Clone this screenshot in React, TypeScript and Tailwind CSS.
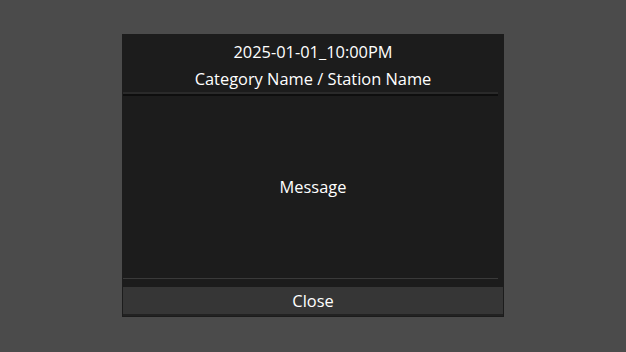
import React from 'react';

const App: React.FC = () => {
  return (
    <div className="w-[626px] h-[352px] bg-[#4b4b4b] pt-[34px] pl-[122px]" style={{ fontFamily: '"Open Sans", "Noto Sans", sans-serif' }}>
      <div className="w-[382px] h-[283px] bg-[#1c1c1c] flex flex-col font-medium">
        {/* Header */}
        <div className="flex flex-col items-center pt-[5px] text-white text-[16.4px] leading-[26px]">
          <div>2025-01-01_10:00PM</div>
          <div className="mt-[1px]">Category Name / Station Name</div>
        </div>
        <div className="ml-[1px] mr-[6px] h-[4px] bg-[#2a2a2a] border-b-2 border-[#0e0e0e]" />

        {/* Body */}
        <div className="flex-1 flex items-center justify-center text-white text-[16.4px]">
          Message
        </div>

        {/* Footer */}
        <div className="ml-[1px] mr-[6px] h-px bg-[#3a3a3a]" />
        <div className="px-[1px] pt-[8px] pb-[1px]">
          <button className="w-full h-[29px] bg-[#363636] border-b-2 border-[#222] text-white text-[16.4px] leading-[26px]">
            Close
          </button>
        </div>
      </div>
    </div>
  );
};

export default App;
